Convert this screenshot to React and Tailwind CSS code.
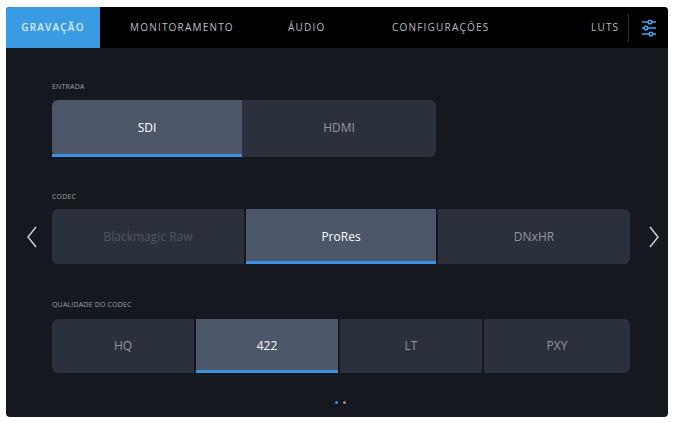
export default function App() {
  const font = { fontFamily: '"Open Sans", "Noto Sans", sans-serif' };
  const Btn = ({ label, sel, dim, w, first, last }) => (
    <div
      className={`relative flex items-center justify-center ${sel ? "bg-[#4d5669] text-white" : "bg-[#2b313c] " + (dim ? "text-[#4f5662]" : "text-[#8f96a2]")} ${first ? "rounded-l-md" : ""} ${last ? "rounded-r-md" : ""} text-[12px]`}
      style={{ width: w }}
    >
      {label}
      {sel && <div className="absolute left-0 right-0 bottom-0 h-[3px] bg-[#3c92e0]" />}
    </div>
  );
  return (
    <div className="w-[673px] h-[423px] bg-white pt-[7px] pl-[6px]" style={font}>
      <div className="w-[662px] h-[410px] bg-[#15191f] rounded-sm overflow-hidden flex flex-col">
        <div className="h-[41px] bg-black flex items-center text-[10px] tracking-[0.12em] text-[#b9bec6]">
          <div className="w-[94px] h-full bg-[#3a9be2] flex items-center justify-center text-[#d9ecfb] font-semibold">GRAVAÇÃO</div>
          <div className="w-[160px] pl-[30px]">MONITORAMENTO</div>
          <div className="w-[92px] pl-[28px]">ÁUDIO</div>
          <div className="w-[174px] pl-[40px]">CONFIGURAÇÕES</div>
          <div className="w-[102px] pl-[65px]">LUTS</div>
          <div className="w-[1px] h-[28px] bg-[#333]" />
          <div className="flex-1 flex justify-center">
            <svg width="16" height="18" viewBox="0 0 16 18" stroke="#4aa3ea" strokeWidth="1.6" fill="none">
              <line x1="1" y1="3" x2="15" y2="3" /><circle cx="9" cy="3" r="1.8" fill="#000" />
              <line x1="1" y1="9" x2="15" y2="9" /><circle cx="5" cy="9" r="1.8" fill="#000" />
              <line x1="1" y1="15" x2="15" y2="15" /><circle cx="10" cy="15" r="1.8" fill="#000" />
            </svg>
          </div>
        </div>
        <div className="relative flex-1 pl-[46px]">
          <div className="text-[7px] text-[#9aa0aa] tracking-wide mt-[34px]">ENTRADA</div>
          <div className="flex h-[57px] mt-[7px]">
            <Btn label="SDI" sel w={190} first />
            <Btn label="HDMI" w={194} last />
          </div>
          <div className="text-[7px] text-[#9aa0aa] tracking-wide mt-[35px]">CODEC</div>
          <div className="flex h-[55px] mt-[7px] gap-[2px]">
            <Btn label="Blackmagic Raw" dim w={192} first />
            <Btn label="ProRes" sel w={190} />
            <Btn label="DNxHR" w={192} last />
          </div>
          <div className="text-[7px] text-[#9aa0aa] tracking-wide mt-[36px]">QUALIDADE DO CODEC</div>
          <div className="flex h-[54px] mt-[8px] gap-[2px]">
            <Btn label="HQ" w={142} first />
            <Btn label="422" sel w={142} />
            <Btn label="LT" w={142} />
            <Btn label="PXY" w={146} last />
          </div>
          <div className="flex justify-center gap-[5px] mt-[28px] pr-[40px]">
            <div className="w-[3px] h-[3px] rounded-full bg-[#3c92e0]" />
            <div className="w-[3px] h-[3px] rounded-full bg-[#8a909a]" />
          </div>
          <svg className="absolute left-[20px] top-[178px]" width="12" height="22" viewBox="0 0 12 22" fill="none" stroke="#c9ced6" strokeWidth="1.5"><path d="M10 1 L2 11 L10 21" /></svg>
          <svg className="absolute left-[642px] top-[178px]" width="12" height="22" viewBox="0 0 12 22" fill="none" stroke="#c9ced6" strokeWidth="1.5"><path d="M2 1 L10 11 L2 21" /></svg>
        </div>
      </div>
    </div>
  );
}
